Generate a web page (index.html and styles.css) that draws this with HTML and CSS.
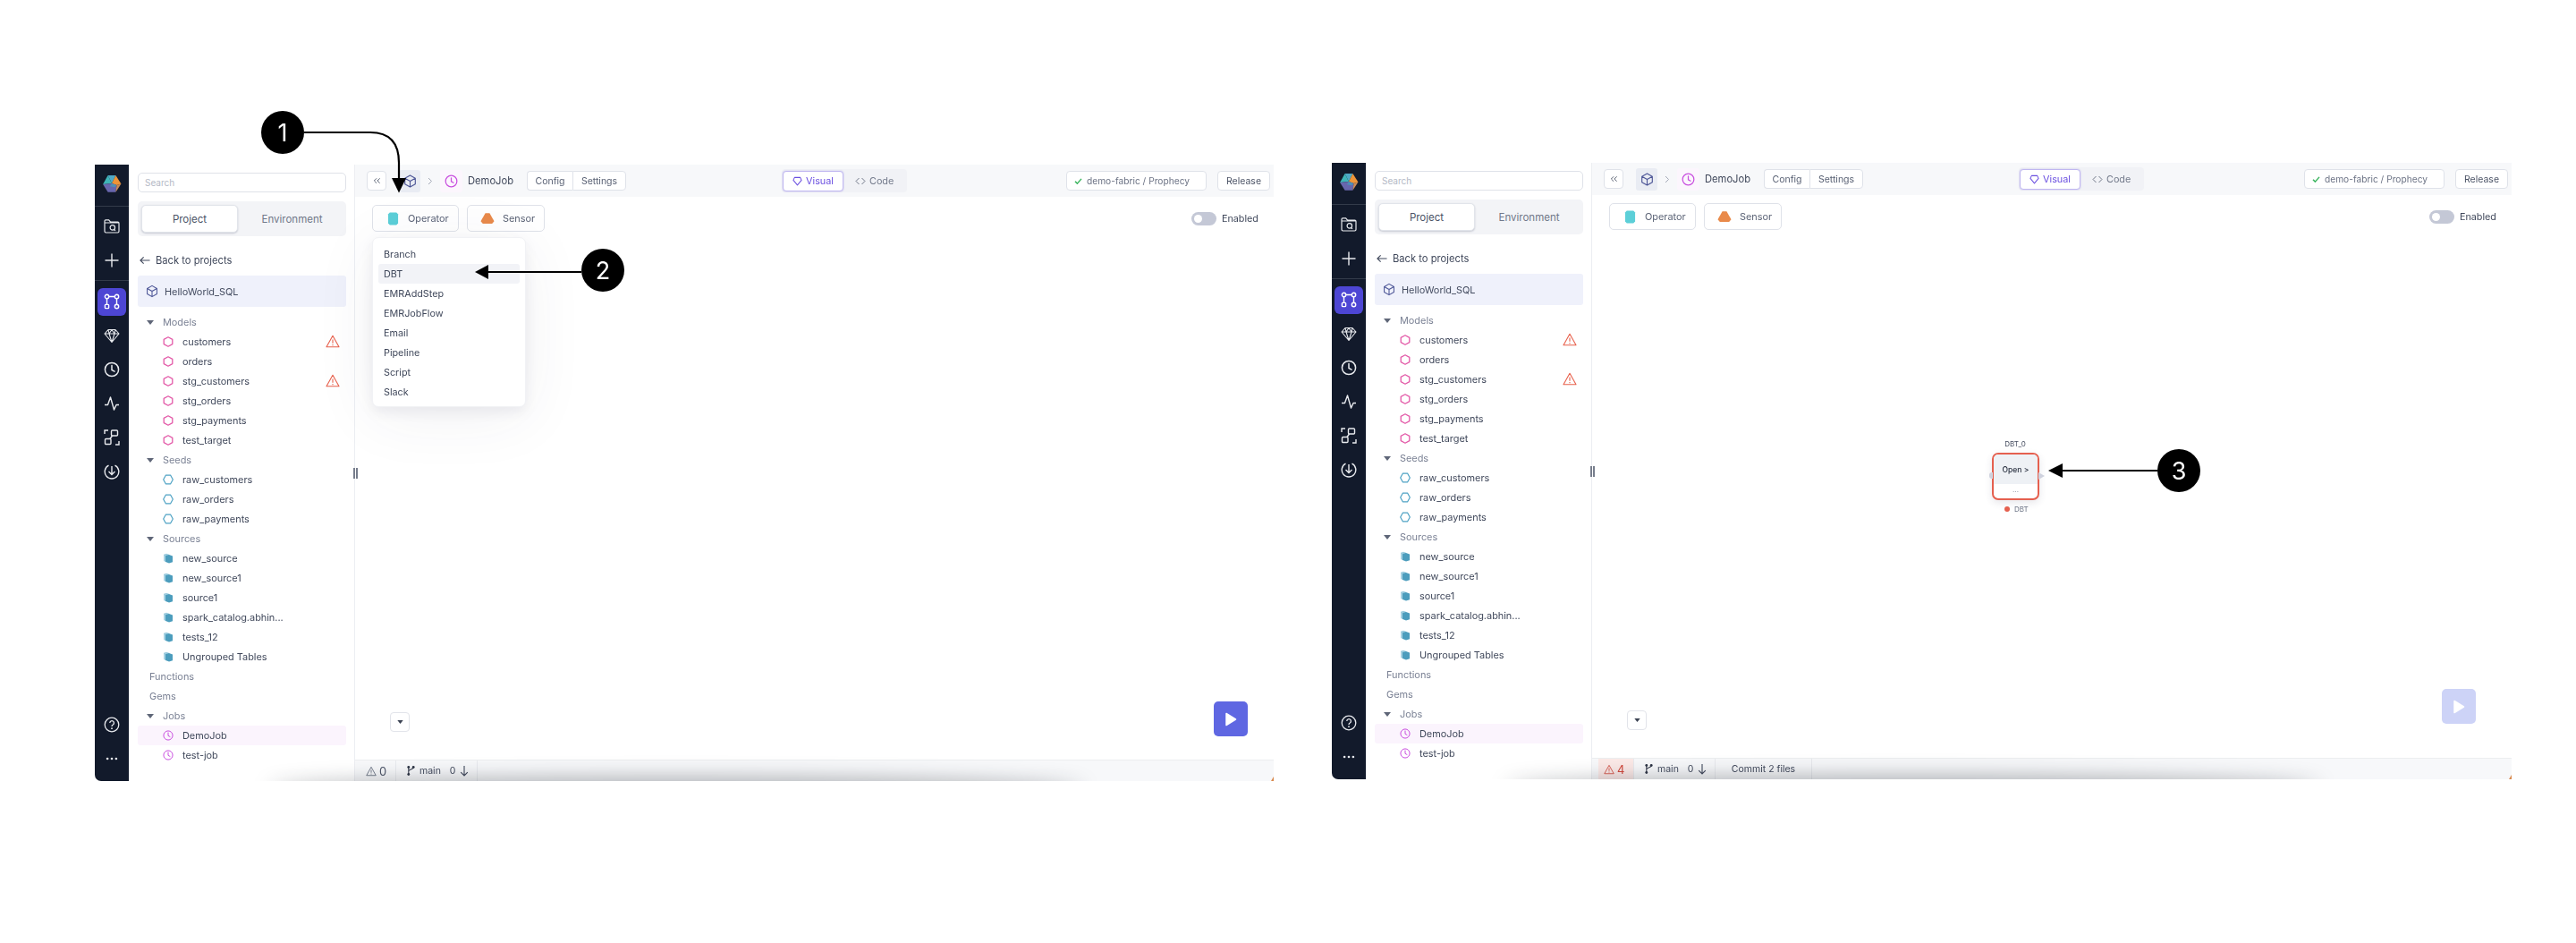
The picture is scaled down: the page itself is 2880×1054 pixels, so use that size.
FILE: index.html
```html
<!DOCTYPE html>
<html lang="en">
<head>
<meta charset="utf-8">
<title>Prophecy DBT job</title>
<link rel="stylesheet" href="styles.css">
</head>
<body>
<svg class="defs" width="0" height="0" aria-hidden="true">
  <defs>
    <symbol id="logo" viewBox="0 0 20 20">
      <polygon points="6,1 14,1 10,9" fill="#4fa9c6"/>
      <polygon points="6,1 10,9 1,10" fill="#3fb4b8"/>
      <polygon points="14,1 19.5,9.5 15,11 10,9" fill="#ee9438"/>
      <polygon points="1,10 10,9 15,11 14,18 6,18" fill="#6866ae"/>
      <polygon points="10,9 15,11 13,13 8,12" fill="#4f8fb8"/>
      <polygon points="15,11 19.5,9.5 14,18" fill="#c98a58"/>
    </symbol>
    <symbol id="folder" viewBox="0 0 18 18"><path d="M1 5V3a1.2 1.2 0 0 1 1.2-1.2h3.4L7.4 4h8.2A1.4 1.4 0 0 1 17 5.4v9.2a1.4 1.4 0 0 1-1.4 1.4H2.4A1.4 1.4 0 0 1 1 14.6V5h16M11.7 12.6l1.3 1.3" fill="none" stroke="currentColor" stroke-width="1.2"/><circle cx="9.8" cy="10.4" r="2.7" fill="none" stroke="currentColor" stroke-width="1.2"/></symbol>
    <symbol id="plus" viewBox="0 0 18 18"><path d="M9 1.5v15M1.5 9h15" fill="none" stroke="currentColor" stroke-width="1.4"/></symbol>
    <symbol id="graph" viewBox="0 0 18 18"><g fill="none" stroke="currentColor" stroke-width="1.4"><circle cx="3.5" cy="3.5" r="2.2"/><circle cx="14.5" cy="3.5" r="2.2"/><rect x="1.4" y="12.4" width="4.2" height="4.2" rx=".8"/><circle cx="14.5" cy="14.5" r="2.2"/><path d="M5.7 3.5h6.6M3.5 5.700v6.700M14.500 5.700v6.600"/></g></symbol>
    <symbol id="gem" viewBox="0 0 18 18"><path d="M5 2.500h8L17 7l-8 9.500L1 7zM1 7h16M5 2.500 6 7l3 9.500L12 7l1-4.500M6 7l3-4.500L12 7" fill="none" stroke="currentColor" stroke-width="1.100" stroke-linejoin="round"/></symbol>
    <symbol id="clock" viewBox="0 0 18 18"><circle cx="9" cy="9" r="7.600" fill="none" stroke="currentColor" stroke-width="1.500"/><path d="M9 4.500V9.500l3 1.600" fill="none" stroke="currentColor" stroke-width="1.500" stroke-linecap="round"/></symbol>
    <symbol id="pulse" viewBox="0 0 18 18"><path d="M1 10.500h3.500L7.500 2l4 14 2.500-5.500h3" fill="none" stroke="currentColor" stroke-width="1.400" stroke-linejoin="round"/></symbol>
    <symbol id="scan" viewBox="0 0 18 18"><g fill="none" stroke="currentColor" stroke-width="1.400"><path d="M1 5V1h4M13 17h4v-4"/><rect x="8.500" y="1" width="7" height="6" rx="1"/><rect x="1.500" y="10.500" width="6.500" height="6" rx="1"/><path d="M9.500 7 7 10.500"/></g></symbol>
    <symbol id="down" viewBox="0 0 18 18"><path d="M5.500 2.200A7.800 7.800 0 1 0 12.500 2.200M9 3v9M5.500 9 9 12.500 12.500 9" fill="none" stroke="currentColor" stroke-width="1.400"/></symbol>
    <symbol id="help" viewBox="0 0 18 18"><circle cx="9" cy="9" r="7.800" fill="none" stroke="currentColor" stroke-width="1.300"/><path d="M6.800 7a2.300 2.300 0 1 1 3.500 2c-.9.500-1.300 1-1.300 1.900" fill="none" stroke="currentColor" stroke-width="1.300"/><circle cx="9" cy="13.200" r=".9" fill="currentColor"/></symbol>
    <symbol id="dots" viewBox="0 0 18 6"><circle cx="3.500" cy="3" r="1.500" fill="currentColor"/><circle cx="9" cy="3" r="1.500" fill="currentColor"/><circle cx="14.500" cy="3" r="1.500" fill="currentColor"/></symbol>
    <symbol id="cube" viewBox="0 0 16 16"><path d="M8 1 14.200 4.500v7L8 15 1.800 11.500v-7zM1.800 4.500 8 8l6.200-3.500M8 8v7" fill="none" stroke="currentColor" stroke-width="1.200" stroke-linejoin="round"/></symbol>
    <symbol id="hexa" viewBox="0 0 12 12"><path d="M6 .8 10.800 3.400v5.200L6 11.200 1.200 8.600V3.400z" fill="none" stroke="currentColor" stroke-width="1.300" stroke-linejoin="round"/></symbol>
    <symbol id="hexb" viewBox="0 0 12 12"><path d="M3.300 1.200h5.400L11.300 6 8.700 10.800H3.300L.7 6z" fill="none" stroke="currentColor" stroke-width="1.200" stroke-linejoin="round"/></symbol>
    <symbol id="src" viewBox="0 0 12 12"><path d="M1 1.800 4 .8 7 1.800v2L4 5 1 3.800z" fill="#9fcddf"/><path d="M1 3.500h2v6.500L1 9z" fill="#a9d3e3"/><path d="M3 3.200 7 2l4 1.500v6.800L7 11.500 3 10z" fill="#4c9dbd"/></symbol>
    <symbol id="warn" viewBox="0 0 16 15"><path d="M8 1.300 15 13.800H1zM8 5.500v4.300M8 11v1.200" fill="none" stroke="currentColor" stroke-width="1.100" stroke-linejoin="round"/></symbol>
    <symbol id="branch" viewBox="0 0 10 13"><g fill="currentColor"><circle cx="2" cy="2" r="1.600"/><circle cx="2" cy="11" r="1.600"/><circle cx="8" cy="2" r="1.600"/></g><path d="M2 2v9M8 2c0 3-6 2.500-6 5" fill="none" stroke="currentColor" stroke-width="1.200"/></symbol>
    <symbol id="arrowdown" viewBox="0 0 10 13"><path d="M5 1v11M1.200 8.200 5 12l3.800-3.800" fill="none" stroke="currentColor" stroke-width="1.100"/></symbol>
    <symbol id="caret" viewBox="0 0 8 5"><path d="M0 0h8L4 5z" fill="currentColor"/></symbol>
    <symbol id="back" viewBox="0 0 13 10"><path d="M12.500 5H1M5 1 1 5l4 4" fill="none" stroke="currentColor" stroke-width="1.200"/></symbol>
    <symbol id="opshape" viewBox="0 0 14 16"><path d="M3 .500h8L13 2.500v11L11 15.500H3L1 13.500v-11z" fill="#5ccfd8"/></symbol>
    <symbol id="sensorshape" viewBox="0 0 17 14"><path d="M6 1h5l5.500 9.500L14 13.500H3L.5 10.500z" fill="#e98a4a"/></symbol>
    <symbol id="visual" viewBox="0 0 12 12"><path d="M2.500 1.500h7L11 4.800 6 10.800 1 4.800z" fill="none" stroke="currentColor" stroke-width="1.100" stroke-linejoin="round"/></symbol>
    <symbol id="code" viewBox="0 0 12 9"><path d="M4.500 1 1 4.500 4.500 8M7.500 1 11 4.500 7.500 8" fill="none" stroke="currentColor" stroke-width="1"/></symbol>
    <symbol id="check" viewBox="0 0 10 8"><path d="M1 4.200 3.700 7 9 1" fill="none" stroke="currentColor" stroke-width="1.700"/></symbol>
    <symbol id="dbl" viewBox="0 0 10 8"><path d="M4.500 1 1.500 4l3 3M8.500 1l-3 3 3 3" fill="none" stroke="currentColor" stroke-width="1"/></symbol>
    <symbol id="chev" viewBox="0 0 6 9"><path d="M1 1l3.500 3.500L1 8" fill="none" stroke="currentColor" stroke-width="1"/></symbol>
    <symbol id="play" viewBox="0 0 14 16"><path d="M2 1.500 12.500 8 2 14.500z" fill="currentColor" stroke="currentColor" stroke-width="1.500" stroke-linejoin="round"/></symbol>
  </defs>
</svg>

<main class="page">
  <section class="window">
    <nav class="rail">
      <div class="rail-logo"><svg class="logo"><use href="#logo"/></svg></div>
      <div class="rail-group">
        <div class="rail-item"><svg class="ri"><use href="#folder"/></svg></div>
        <div class="rail-item"><svg class="ri"><use href="#plus"/></svg></div>
      </div>
      <div class="rail-group">
        <div class="rail-item"><span class="rail-tile"><svg class="ri"><use href="#graph"/></svg></span></div>
        <div class="rail-item"><svg class="ri"><use href="#gem"/></svg></div>
        <div class="rail-item"><svg class="ri"><use href="#clock"/></svg></div>
        <div class="rail-item"><svg class="ri"><use href="#pulse"/></svg></div>
        <div class="rail-item"><svg class="ri"><use href="#scan"/></svg></div>
        <div class="rail-item"><svg class="ri"><use href="#down"/></svg></div>
      </div>
      <div class="rail-foot">
        <div class="rail-item"><svg class="ri"><use href="#help"/></svg></div>
        <div class="rail-item"><svg class="rd"><use href="#dots"/></svg></div>
      </div>
    </nav>
    <aside class="panel">
      <div class="search">Search</div>
      <div class="tabs"><span class="tab tab-on">Project</span><span class="tab">Environment</span></div>
      <div class="back"><svg class="back-i"><use href="#back"/></svg>Back to projects</div>
      <div class="project"><svg class="project-i"><use href="#cube"/></svg>HelloWorld_SQL</div>
      <ul class="tree">
        <li class="sec"><svg class="caret"><use href="#caret"/></svg>Models</li>
        <li class="item"><svg class="ti pink"><use href="#hexa"/></svg>customers<svg class="warn"><use href="#warn"/></svg></li>
        <li class="item"><svg class="ti pink"><use href="#hexa"/></svg>orders</li>
        <li class="item"><svg class="ti pink"><use href="#hexa"/></svg>stg_customers<svg class="warn"><use href="#warn"/></svg></li>
        <li class="item"><svg class="ti pink"><use href="#hexa"/></svg>stg_orders</li>
        <li class="item"><svg class="ti pink"><use href="#hexa"/></svg>stg_payments</li>
        <li class="item"><svg class="ti pink"><use href="#hexa"/></svg>test_target</li>
        <li class="sec"><svg class="caret"><use href="#caret"/></svg>Seeds</li>
        <li class="item"><svg class="ti blue"><use href="#hexb"/></svg>raw_customers</li>
        <li class="item"><svg class="ti blue"><use href="#hexb"/></svg>raw_orders</li>
        <li class="item"><svg class="ti blue"><use href="#hexb"/></svg>raw_payments</li>
        <li class="sec"><svg class="caret"><use href="#caret"/></svg>Sources</li>
        <li class="item"><svg class="ti"><use href="#src"/></svg>new_source</li>
        <li class="item"><svg class="ti"><use href="#src"/></svg>new_source1</li>
        <li class="item"><svg class="ti"><use href="#src"/></svg>source1</li>
        <li class="item"><svg class="ti"><use href="#src"/></svg>spark_catalog.abhin...</li>
        <li class="item"><svg class="ti"><use href="#src"/></svg>tests_12</li>
        <li class="item"><svg class="ti"><use href="#src"/></svg>Ungrouped Tables</li>
        <li class="sec sec-flat">Functions</li>
        <li class="sec sec-flat">Gems</li>
        <li class="sec"><svg class="caret"><use href="#caret"/></svg>Jobs</li>
        <li class="item item-on"><svg class="ti purple"><use href="#clock"/></svg>DemoJob</li>
        <li class="item"><svg class="ti purple"><use href="#clock"/></svg>test-job</li>
      </ul>
    </aside>
    <div class="main">
      <span class="handle"></span>
      <header class="bar">
        <span class="btn btn-sq"><svg class="dbl"><use href="#dbl"/></svg></span>
        <span class="crumb-tile"><svg class="crumb-cube"><use href="#cube"/></svg></span>
        <svg class="chev"><use href="#chev"/></svg>
        <span class="crumb-tile crumb-job"><svg class="crumb-clock"><use href="#clock"/></svg></span>
        <span class="job-name">DemoJob</span>
        <span class="btn-group"><span class="seg">Config</span><span class="seg">Settings</span></span>
        <span class="mode"><span class="mode-on"><svg class="mode-i"><use href="#visual"/></svg>Visual</span><span class="mode-off"><svg class="code-i"><use href="#code"/></svg>Code</span></span>
        <span class="fabric"><svg class="check"><use href="#check"/></svg>demo-fabric / Prophecy</span>
        <span class="btn release">Release</span>
      </header>
      <div class="canvas">
        <div class="tools">
          <span class="tool tool-op"><svg class="op-i"><use href="#opshape"/></svg>Operator</span>
          <span class="tool tool-se"><svg class="se-i"><use href="#sensorshape"/></svg>Sensor</span>
          <span class="enabled"><span class="switch"></span>Enabled</span>
        </div>
        <ul class="menu">
          <li>Branch</li><li class="menu-on">DBT</li><li>EMRAddStep</li><li>EMRJobFlow</li><li>Email</li><li>Pipeline</li><li>Script</li><li>Slack</li>
        </ul>
        <span class="mini"><svg class="mini-i"><use href="#caret"/></svg></span>
        <span class="run"><svg class="run-i"><use href="#play"/></svg></span>
      </div>
      <footer class="status">
        <span class="st st-warn"><svg class="st-w"><use href="#warn"/></svg>0</span>
        <span class="st st-git"><svg class="st-b"><use href="#branch"/></svg><span class="st-main">main</span><span>0</span><svg class="st-d"><use href="#arrowdown"/></svg></span>
      </footer>
    </div>
    <span class="shade"></span>
    <span class="corner"></span>
  </section>

  <section class="window window-b">
    <nav class="rail">
      <div class="rail-logo"><svg class="logo"><use href="#logo"/></svg></div>
      <div class="rail-group">
        <div class="rail-item"><svg class="ri"><use href="#folder"/></svg></div>
        <div class="rail-item"><svg class="ri"><use href="#plus"/></svg></div>
      </div>
      <div class="rail-group">
        <div class="rail-item"><span class="rail-tile"><svg class="ri"><use href="#graph"/></svg></span></div>
        <div class="rail-item"><svg class="ri"><use href="#gem"/></svg></div>
        <div class="rail-item"><svg class="ri"><use href="#clock"/></svg></div>
        <div class="rail-item"><svg class="ri"><use href="#pulse"/></svg></div>
        <div class="rail-item"><svg class="ri"><use href="#scan"/></svg></div>
        <div class="rail-item"><svg class="ri"><use href="#down"/></svg></div>
      </div>
      <div class="rail-foot">
        <div class="rail-item"><svg class="ri"><use href="#help"/></svg></div>
        <div class="rail-item"><svg class="rd"><use href="#dots"/></svg></div>
      </div>
    </nav>
    <aside class="panel">
      <div class="search">Search</div>
      <div class="tabs"><span class="tab tab-on">Project</span><span class="tab">Environment</span></div>
      <div class="back"><svg class="back-i"><use href="#back"/></svg>Back to projects</div>
      <div class="project"><svg class="project-i"><use href="#cube"/></svg>HelloWorld_SQL</div>
      <ul class="tree">
        <li class="sec"><svg class="caret"><use href="#caret"/></svg>Models</li>
        <li class="item"><svg class="ti pink"><use href="#hexa"/></svg>customers<svg class="warn"><use href="#warn"/></svg></li>
        <li class="item"><svg class="ti pink"><use href="#hexa"/></svg>orders</li>
        <li class="item"><svg class="ti pink"><use href="#hexa"/></svg>stg_customers<svg class="warn"><use href="#warn"/></svg></li>
        <li class="item"><svg class="ti pink"><use href="#hexa"/></svg>stg_orders</li>
        <li class="item"><svg class="ti pink"><use href="#hexa"/></svg>stg_payments</li>
        <li class="item"><svg class="ti pink"><use href="#hexa"/></svg>test_target</li>
        <li class="sec"><svg class="caret"><use href="#caret"/></svg>Seeds</li>
        <li class="item"><svg class="ti blue"><use href="#hexb"/></svg>raw_customers</li>
        <li class="item"><svg class="ti blue"><use href="#hexb"/></svg>raw_orders</li>
        <li class="item"><svg class="ti blue"><use href="#hexb"/></svg>raw_payments</li>
        <li class="sec"><svg class="caret"><use href="#caret"/></svg>Sources</li>
        <li class="item"><svg class="ti"><use href="#src"/></svg>new_source</li>
        <li class="item"><svg class="ti"><use href="#src"/></svg>new_source1</li>
        <li class="item"><svg class="ti"><use href="#src"/></svg>source1</li>
        <li class="item"><svg class="ti"><use href="#src"/></svg>spark_catalog.abhin...</li>
        <li class="item"><svg class="ti"><use href="#src"/></svg>tests_12</li>
        <li class="item"><svg class="ti"><use href="#src"/></svg>Ungrouped Tables</li>
        <li class="sec sec-flat">Functions</li>
        <li class="sec sec-flat">Gems</li>
        <li class="sec"><svg class="caret"><use href="#caret"/></svg>Jobs</li>
        <li class="item item-on"><svg class="ti purple"><use href="#clock"/></svg>DemoJob</li>
        <li class="item"><svg class="ti purple"><use href="#clock"/></svg>test-job</li>
      </ul>
    </aside>
    <div class="main">
      <span class="handle"></span>
      <header class="bar">
        <span class="btn btn-sq"><svg class="dbl"><use href="#dbl"/></svg></span>
        <span class="crumb-tile"><svg class="crumb-cube"><use href="#cube"/></svg></span>
        <svg class="chev"><use href="#chev"/></svg>
        <span class="crumb-tile crumb-job"><svg class="crumb-clock"><use href="#clock"/></svg></span>
        <span class="job-name">DemoJob</span>
        <span class="btn-group"><span class="seg">Config</span><span class="seg">Settings</span></span>
        <span class="mode"><span class="mode-on"><svg class="mode-i"><use href="#visual"/></svg>Visual</span><span class="mode-off"><svg class="code-i"><use href="#code"/></svg>Code</span></span>
        <span class="fabric"><svg class="check"><use href="#check"/></svg>demo-fabric / Prophecy</span>
        <span class="btn release">Release</span>
      </header>
      <div class="canvas">
        <div class="tools">
          <span class="tool tool-op"><svg class="op-i"><use href="#opshape"/></svg>Operator</span>
          <span class="tool tool-se"><svg class="se-i"><use href="#sensorshape"/></svg>Sensor</span>
          <span class="enabled"><span class="switch"></span>Enabled</span>
        </div>
        <div class="node">
          <span class="node-title">DBT_0</span>
          <div class="node-box">
            <span class="node-open">Open &gt;</span>
            <span class="node-more">...</span>
          </div>
          <span class="port-l"></span>
          <span class="port-r"></span>
          <span class="node-type"><span class="node-dot"></span>DBT</span>
        </div>
        <span class="mini"><svg class="mini-i"><use href="#caret"/></svg></span>
        <span class="run run-off"><svg class="run-i"><use href="#play"/></svg></span>
      </div>
      <footer class="status">
        <span class="st st-warn st-bad"><svg class="st-w"><use href="#warn"/></svg>4</span>
        <span class="st st-git"><svg class="st-b"><use href="#branch"/></svg><span class="st-main">main</span><span>0</span><svg class="st-d"><use href="#arrowdown"/></svg></span>
        <span class="st st-commit">Commit 2 files</span>
      </footer>
    </div>
    <span class="shade"></span>
    <span class="corner"></span>
  </section>

  <svg class="arrows" width="2880" height="1054" aria-hidden="true">
    <g fill="none" stroke="#000" stroke-width="2.200">
      <path d="M340 148H414C436 148 446 160 446 182V200"/>
      <path d="M650 304H544"/>
      <path d="M2412 526H2304"/>
    </g>
    <g fill="#000">
      <polygon points="438,199 454,199 446,215.500"/>
      <polygon points="531,304 546,296 546,312"/>
      <polygon points="2290,526 2306,518 2306,534"/>
    </g>
  </svg>
  <span class="badge badge-1">1</span>
  <span class="badge badge-2">2</span>
  <span class="badge badge-3">3</span>
</main>
</body>
</html>
```

FILE: styles.css
```css
* { box-sizing: border-box; }
html, body { margin: 0; padding: 0; background: #fff; }
body { width: 2880px; height: 1054px; overflow: hidden; font-family: "Inter", "Liberation Sans", sans-serif; color: #41495c; }
ul { list-style: none; margin: 0; padding: 0; }
svg { display: block; flex: none; }
.defs { position: absolute; }

.page { position: relative; display: flex; gap: 65px; align-items: flex-start; padding: 184px 0 0 106px; width: 2880px; height: 1054px; }
.window { position: relative; display: flex; width: 1318px; height: 689px; flex: none; overflow: hidden; border-bottom-left-radius: 7px; filter: blur(.3px); }
.window-b { width: 1319px; margin-top: -2px; }

.rail { width: 38px; flex: none; display: flex; flex-direction: column; background: #121a2b; color: #e8eaee; }
.rail-logo { height: 47px; display: flex; align-items: center; justify-content: center; border-bottom: 1px solid #333b4a; }
.logo { width: 22px; height: 22px; margin-top: -3px; }
.rail-group { padding: 3px 0 3px; border-bottom: 1px solid #333b4a; }
.rail-group + .rail-group { border-bottom: 0; padding-top: 4px; }
.rail-item { height: 38px; display: flex; align-items: center; justify-content: center; }
.ri { width: 18px; height: 18px; }
.rd { width: 16px; height: 6px; }
.rail-tile { width: 32px; height: 31px; border-radius: 6px; background: #4d46d4; display: flex; align-items: center; justify-content: center; color: #fff; }
.rail-foot { margin-top: auto; padding-bottom: 6px; }

.panel { width: 252px; flex: none; padding: 9px 9px 0 10px; background: #fff; font-size: 10.900px; }
.search { height: 22px; border: 1px solid #dfe2e9; border-radius: 5px; padding-left: 7px; line-height: 20px; font-size: 10px; color: #b4b9c6; }
.tabs { height: 39px; margin-top: 10px; padding: 4px; display: flex; background: #f3f4f7; border-radius: 5px; font-size: 11.500px; }
.tab { flex: 1; display: flex; align-items: center; justify-content: center; color: #717889; }
.tab-on { flex: none; width: 108px; height: 31px; margin-right: 4px; background: #fff; border: 1px solid #e1e4ea; border-radius: 5px; box-shadow: 0 1px 2px rgba(40, 50, 80, .22); color: #4b5366; }
.back { height: 22px; margin-top: 16px; display: flex; align-items: center; gap: 6px; padding-left: 2px; font-size: 11.200px; }
.back-i { width: 12px; height: 10px; }
.project { height: 35px; margin-top: 6px; display: flex; align-items: center; gap: 7px; padding-left: 9px; background: #eff1fb; border-radius: 3px; font-size: 10.900px; color: #444c60; }
.project-i { width: 14px; height: 15px; color: #4c5596; }
.tree { margin-top: 6px; }
.sec, .item { height: 22px; display: flex; align-items: center; position: relative; font-size: 10.900px; }
.sec { padding-left: 10px; color: #7a8194; }
.sec-flat { padding-left: 13px; }
.caret { width: 8px; height: 5px; margin-right: 10px; color: #5f6678; }
.item { padding-left: 28px; color: #3f475a; }
.item-on { background: #fbf4fd; border-radius: 3px; }
.ti { width: 12px; height: 12px; margin-right: 10px; }
.pink { color: #e35aa8; }
.blue { color: #4ea2c4; }
.purple { color: #c94fdf; }
.warn { position: absolute; left: 210px; top: 3px; width: 16px; height: 15px; color: #e8604c; }

.main { position: relative; flex: 1; min-width: 0; display: flex; flex-direction: column; border-left: 1px solid #eceef2; }
.handle { position: absolute; left: -2px; top: 339px; width: 5px; height: 12px; border-left: 2px solid #767d8c; border-right: 2px solid #767d8c; background: #fff; z-index: 2; }
.bar { height: 36px; flex: none; display: flex; align-items: center; padding: 0 4px 0 13px; background: #f7f8fa; font-size: 10.500px; }
.btn, .seg, .fabric { background: #fff; border: 1px solid #dfe2e9; }
.btn { height: 22px; border-radius: 4px; display: flex; align-items: center; justify-content: center; color: #4b5366; }
.btn-sq { width: 22px; }
.dbl { width: 9px; height: 8px; }
.crumb-tile { width: 24px; height: 25px; margin-left: 14px; border-radius: 3px; background: #e9ecf3; display: flex; align-items: center; justify-content: center; }
.crumb-cube { width: 15px; height: 15px; color: #4c5596; }
.chev { width: 6px; height: 9px; margin-left: 8px; color: #a3a9b6; }
.crumb-job { margin-left: 8px; background: #fcf6fd; width: 25px; }
.crumb-clock { width: 15px; height: 15px; color: #c94fdf; }
.job-name { width: 50px; flex: none; margin-left: 6px; font-size: 11.200px; white-space: nowrap; color: #3f475a; }
.btn-group { display: flex; margin-left: 16px; height: 22px; }
.seg { display: flex; align-items: center; justify-content: center; color: #586073; font-size: 10.500px; }
.seg:first-child { width: 51px; border-radius: 4px 0 0 4px; border-right: 0; }
.seg:last-child { width: 60px; border-radius: 0 4px 4px 0; }
.mode { display: flex; align-items: center; width: 140px; height: 26px; margin-left: 174px; padding: 2px 1px; background: #f1f2f6; border-radius: 4px; font-size: 10.800px; }
.mode-on { width: 68px; height: 23px; display: flex; align-items: center; justify-content: center; gap: 4px; background: #fff; border: 1px solid #bfb6f0; border-radius: 4px; color: #6a4fe0; box-shadow: 0 0 2px rgba(90, 70, 220, .3); }
.mode-i { width: 11px; height: 11px; }
.mode-off { display: flex; align-items: center; gap: 4px; margin-left: 13px; color: #717889; }
.code-i { width: 12px; height: 9px; }
.fabric { width: 157px; height: 22px; margin-left: auto; border-radius: 4px; display: flex; align-items: center; gap: 5px; padding-left: 8px; font-size: 10.200px; color: #6b7284; }
.check { width: 9px; height: 7px; color: #3ab55e; }
.release { width: 59px; margin-left: 12px; font-size: 10.500px; }

.canvas { position: relative; flex: 1; min-height: 0; background: #fff; }
.tools { display: flex; align-items: center; padding: 9px 17px 0 19px; font-size: 10.900px; color: #5b6376; }
.tool { height: 30px; display: flex; align-items: center; background: #fff; border: 1px solid #dfe2e9; border-radius: 5px; }
.tool-op { width: 97px; padding-left: 16px; gap: 10px; }
.tool-se { width: 87px; margin-left: 9px; padding-left: 14px; gap: 9px; }
.op-i { width: 13px; height: 15px; }
.se-i { width: 16px; height: 14px; }
.enabled { margin-left: auto; display: flex; align-items: center; gap: 6px; font-size: 10.800px; color: #3f475a; }
.switch { position: relative; width: 28px; height: 15px; background: #c4c8d6; border-radius: 8px; }
.switch::before { content: ""; position: absolute; left: 3px; top: 3px; width: 9px; height: 9px; background: #fff; border-radius: 50%; }
.menu { position: absolute; left: 19px; top: 45px; width: 172px; height: 190px; padding: 7px 6px; background: #fff; border: 1px solid #f1f2f5; border-radius: 7px; box-shadow: 0 6px 14px rgba(50, 55, 90, .08), 0 10px 70px rgba(50, 55, 90, .07); font-size: 10.800px; color: #3f475a; }
.menu li { height: 22px; padding-left: 6px; display: flex; align-items: center; border-radius: 3px; }
.menu .menu-on { background: #f2f3f7; }
.mini { position: absolute; left: 39px; bottom: 31px; width: 22px; height: 22px; display: flex; align-items: center; justify-content: center; background: #fff; border: 1px solid #e2e4ea; border-radius: 4px; }
.mini-i { width: 7px; height: 4px; color: #3b4252; }
.run { position: absolute; right: 29px; bottom: 26px; width: 38px; height: 39px; display: flex; align-items: center; justify-content: center; background: #5f67e2; border-radius: 5px; color: #fff; }
.run-i { width: 14px; height: 16px; }
.run-off { right: 40px; bottom: 38px; background: #cdd3f7; }

.node { position: absolute; left: 438px; top: 272px; width: 70px; height: 86px; font-size: 8px; color: #454c5f; }
.node-title { position: absolute; left: 0; right: 0; top: 0; text-align: center; font-size: 8px; line-height: 12px; }
.node-box { position: absolute; left: 9px; top: 16px; width: 53px; height: 53px; display: flex; flex-direction: column; background: #fff; border: 2px solid #e5604f; border-radius: 7px; box-shadow: 0 3px 8px rgba(60, 60, 90, .12); overflow: hidden; }
.node-open { height: 33px; flex: none; display: flex; align-items: center; justify-content: center; background: #eef1f5; font-size: 8.500px; font-weight: 500; color: #1f2636; }
.node-more { flex: 1; text-align: center; font-size: 8px; line-height: 12px; color: #7b8294; }
.port-l { position: absolute; left: 6px; top: 38px; width: 4px; height: 7px; background: #cfd2dd; border-radius: 3px 0 0 3px; }
.port-r { position: absolute; left: 61px; top: 38px; width: 0; height: 0; border-left: 7px solid #cfd2de; border-top: 4px solid transparent; border-bottom: 4px solid transparent; }
.node-type { position: absolute; left: 23px; top: 73px; display: flex; align-items: center; gap: 5px; line-height: 12px; color: #6d7486; }
.node-dot { width: 6px; height: 6px; border-radius: 50%; background: #e5604f; }

.status { height: 24px; flex: none; display: flex; background: #f7f8fa; border-top: 1px solid #eceef0; font-size: 10.500px; color: #41495c; }
.st { height: 100%; display: flex; align-items: center; }
.st-warn { width: 46px; padding-left: 12px; gap: 3px; font-size: 13px; border-right: 1px solid #e8eaee; color: #4b5366; }
.st-w { width: 12px; height: 12px; color: #5b6376; }
.st-bad { color: #d2463a; background: #fbe9e7; margin-left: 7px; width: 40px; padding-left: 6px; }
.st-bad .st-w { color: #d2463a; }
.st-git { width: 91px; padding-left: 12px; border-right: 1px solid #e8eaee; }
.st-b { width: 9px; height: 13px; margin-right: 5px; color: #2f3646; }
.st-main { margin-right: 10px; }
.st-d { width: 10px; height: 13px; margin-left: 5px; }
.st-commit { width: 108px; justify-content: center; border-right: 1px solid #e8eaee; color: #3f475a; }

.shade { position: absolute; left: 200px; bottom: -16px; width: 900px; height: 14px; border-radius: 50%; box-shadow: 0 0 22px 6px rgba(30, 35, 45, .34); pointer-events: none; z-index: 3; }
.corner { position: absolute; right: 0; bottom: 0; width: 3px; height: 5px; background: #d98a4e; clip-path: polygon(100% 0, 100% 100%, 0 100%); z-index: 4; }

.arrows { position: absolute; left: 0; top: 0; z-index: 5; pointer-events: none; }
.badge { position: absolute; width: 48px; height: 48px; margin: -24px 0 0 -24px; display: flex; align-items: center; justify-content: center; background: #000; border-radius: 50%; color: #fff; font-size: 27px; line-height: 1; z-index: 6; }
.badge-1 { left: 316px; top: 148px; }
.badge-2 { left: 674px; top: 302px; }
.badge-3 { left: 2436px; top: 526px; }
```
